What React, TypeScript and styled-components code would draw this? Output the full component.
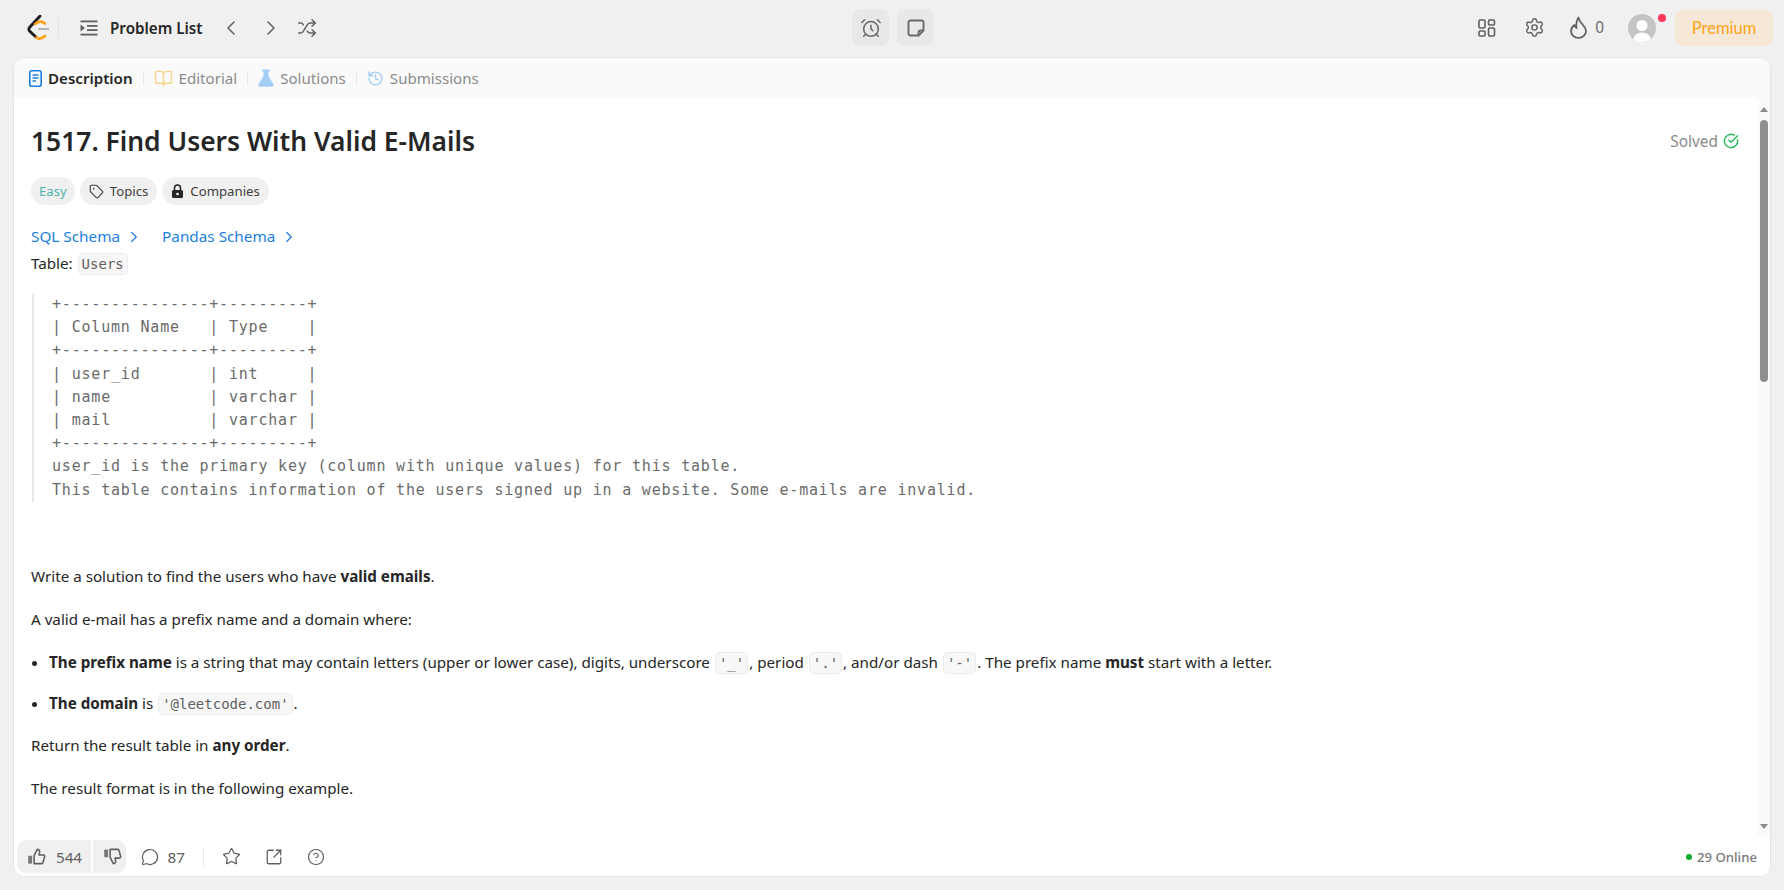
import React from 'react';
import styled, { createGlobalStyle } from 'styled-components';
import {
  AlarmClock, ChevronLeft, ChevronRight, CircleCheckBig, CircleHelp, BookOpen, History,
  MessageCircle, Settings, Shuffle, SquareArrowOutUpRight, Star, Tag,
} from 'lucide-react';

const Global = createGlobalStyle`
  html, body { margin: 0; height: 100%; background: #f0f0f0; overflow: hidden; }
  body { font-family: "Noto Sans", "Open Sans", sans-serif; color: #262626; }
  #root { height: 100%; }
  * { box-sizing: border-box; }
`;

const Page = styled.div`
  height: 890px;
  display: flex;
  flex-direction: column;
  padding: 0 13px 13px;
`;

const TopBar = styled.header`
  height: 57px;
  flex: none;
  display: grid;
  grid-template-columns: 1fr auto 1fr;
  align-items: center;
  padding-bottom: 2px;
  margin-right: -2px;
`;

const TopLeft = styled.div`
  display: flex;
  align-items: center;
  color: #5f5f5f;
`;

const TopRight = styled.div`
  display: flex;
  align-items: center;
  justify-content: flex-end;
  color: #5f5f5f;
`;

const Logo = styled.svg`
  width: 22px;
  height: 26px;
  margin-left: 14px;
`;

const BarDivider = styled.span`
  width: 1px;
  height: 18px;
  background: #e2e2e2;
  margin: 0 21px 0 9px;
`;

const ProblemList = styled.span`
  font-size: 15.2px;
  font-weight: 600;
  color: #262626;
  margin: 0 17px 0 12px;
  white-space: nowrap;
`;

const NavIcon = styled.span<{ $gap?: number }>`
  display: flex;
  margin-right: ${(p) => p.$gap ?? 0}px;
`;

const CenterTools = styled.div`
  display: flex;
  gap: 8px;
`;

const ToolButton = styled.div`
  width: 37px;
  height: 37px;
  border-radius: 8px;
  background: #e8e8e8;
  display: flex;
  align-items: center;
  justify-content: center;
  color: #6b6b6b;
`;

const Streak = styled.span`
  font-size: 15.4px;
  color: #6b6b6b;
  margin: 0 24px 0 8px;
`;

const AvatarWrap = styled.div`
  position: relative;
  width: 28px;
  height: 28px;
  margin-right: 19px;
`;

const RedDot = styled.span`
  position: absolute;
  top: 0;
  right: -10px;
  width: 8px;
  height: 8px;
  border-radius: 50%;
  background: #ff375f;
`;

const Premium = styled.div`
  width: 98px;
  height: 37px;
  border-radius: 9px;
  background: #f5e8d6;
  color: #ffa116;
  font-family: "Lato", sans-serif;
  font-size: 16.5px;
  display: flex;
  align-items: center;
  justify-content: center;
`;

const Card = styled.main`
  flex: 1;
  min-height: 0;
  display: flex;
  flex-direction: column;
  background: #fff;
  border: 1px solid #e4e4e4;
  border-radius: 11px;
  overflow: hidden;
`;

const Tabs = styled.nav`
  height: 40px;
  flex: none;
  background: #fafafa;
  display: flex;
  align-items: center;
  padding-left: 15px;
`;

const Tab = styled.div<{ $active?: boolean }>`
  display: flex;
  align-items: center;
  gap: 6px;
  font-size: 15.1px;
  font-weight: ${(p) => (p.$active ? 600 : 400)};
  color: ${(p) => (p.$active ? '#262626' : '#8a8a8a')};
  white-space: nowrap;
`;

const TabDivider = styled.span`
  width: 1px;
  height: 14px;
  background: #e6e6e6;
  margin: 0 10px;
`;

const Body = styled.div`
  flex: 1;
  min-height: 0;
  display: flex;
`;

const Content = styled.div`
  flex: 1;
  min-width: 0;
  overflow: hidden;
  padding: 0 17px;
`;

const Rail = styled.div`
  width: 13px;
  flex: none;
  background: #fafafa;
  display: flex;
  flex-direction: column;
  align-items: center;
`;

const RailButton = styled.div`
  height: 22px;
  flex: none;
  display: flex;
  align-items: center;
  justify-content: center;
`;

const Arrow = styled.span<{ $down?: boolean }>`
  width: 0;
  height: 0;
  border-left: 4px solid transparent;
  border-right: 4px solid transparent;
  border-${(p) => (p.$down ? 'top' : 'bottom')}: 5px solid #8a8a8a;
`;

const Thumb = styled.div`
  width: 8px;
  height: 262px;
  border-radius: 4px;
  background: #8f8f8f;
`;

const RailSpace = styled.div`
  flex: 1;
`;

const TitleRow = styled.div`
  display: flex;
  align-items: center;
  justify-content: space-between;
  height: 79px;
  padding-top: 7px;
`;

const Title = styled.h1`
  margin: 0;
  font-size: 26.4px;
  font-weight: 600;
  color: #262626;
`;

const Solved = styled.div`
  display: flex;
  align-items: center;
  gap: 5px;
  font-size: 15.4px;
  color: #8a8a8a;
  margin-right: 1px;
`;

const Pills = styled.div`
  display: flex;
  gap: 5px;
  height: 28px;
`;

const Pill = styled.div<{ $green?: boolean }>`
  display: flex;
  align-items: center;
  gap: 6px;
  height: 28px;
  padding: 0 ${(p) => (p.$green ? 8 : 9)}px;
  border-radius: 14px;
  background: #f0f0f0;
  font-size: 13.2px;
  color: ${(p) => (p.$green ? '#4db6ac' : '#3d3d3d')};
`;

const LinkRow = styled.div`
  display: flex;
  margin-top: 20px;
  line-height: 23px;
  gap: 19px;
`;

const SchemaLink = styled.a`
  display: flex;
  align-items: center;
  gap: 5px;
  color: #1a7fe0;
  font-size: 15.3px;
`;

const Para = styled.p<{ $top?: number }>`
  margin: ${(p) => p.$top ?? 19}px 0 0;
  font-size: 15.2px;
  line-height: 24px;
  color: #262626;
`;

const TableLine = styled(Para)`
  margin: 3px 0 0;
`;

const Code = styled.code`
  font-family: "DejaVu Sans Mono", monospace;
  font-size: 14px;
  color: #5f5f5f;
  background: #f7f7f7;
  border: 1px solid #ececec;
  border-radius: 5px;
  padding: 2px 3px;
  margin: 0 1px;
`;

const Pre = styled.pre`
  margin: 17px 0 0 1px;
  padding: 0 0 0 18px;
  border-left: 2px solid #e8e8e8;
  font-family: "DejaVu Sans Mono", monospace;
  font-size: 15px;
  letter-spacing: 0.8px;
  line-height: 23.2px;
  color: #6b6b6b;
`;

const List = styled.ul`
  margin: 19px 0 0;
  padding: 0 0 0 18px;
  font-size: 15.2px;
  line-height: 24px;
  color: #262626;
`;

const Item = styled.li`
  margin-top: 16px;
  &:first-child { margin-top: 0; }
`;

const Footer = styled.footer`
  height: 39px;
  flex: none;
  display: flex;
  align-items: center;
  padding-left: 3px;
  color: #5f5f5f;
  background: #fff;
`;

const Vote = styled.div`
  display: flex;
  align-items: center;
  height: 33px;
  border-radius: 9px;
  overflow: hidden;
  gap: 1.5px;
  background: #fff;
`;

const VoteSide = styled.div<{ $w: number }>`
  height: 100%;
  width: ${(p) => p.$w}px;
  background: #f0f0f0;
  display: flex;
  align-items: center;
  padding-left: 10px;
  gap: 10px;
  font-size: 15.2px;
`;

const Count = styled.span`
  display: flex;
  align-items: center;
  gap: 9px;
  margin-left: 15px;
  font-size: 15.2px;
`;

const FootDivider = styled.span`
  width: 1px;
  height: 18px;
  background: #eaeaea;
  margin: 0 18px;
`;

const FootIcon = styled.span`
  display: flex;
  margin-right: 24px;
`;

const Online = styled.div`
  margin-left: auto;
  margin-right: 13px;
  display: flex;
  align-items: center;
  gap: 5px;
  font-size: 13.2px;
  font-weight: 500;
  color: #7a7a7a;
`;

const OnlineDot = styled.span`
  width: 6px;
  height: 6px;
  border-radius: 50%;
  background: #0fa92b;
`;

const tableText = `+---------------+---------+
| Column Name   | Type    |
+---------------+---------+
| user_id       | int     |
| name          | varchar |
| mail          | varchar |
+---------------+---------+
user_id is the primary key (column with unique values) for this table.
This table contains information of the users signed up in a website. Some e-mails are invalid.`;

function Thumbs({ down }: { down?: boolean }) {
  return (
    <svg width="19" height="19" viewBox="0 0 24 24" fill="none" stroke="#5f5f5f" strokeWidth="2" strokeLinejoin="round">
      <g transform={down ? 'translate(0 24) scale(1 -1)' : undefined}>
        <rect x="1.5" y="11" width="5" height="10" rx="1" fill="#7a7a7a" stroke="none" />
        <path d="M9 11 L13 3 a3 3 0 0 1 3 3.6 L15.2 10 h5 a2 2 0 0 1 2 2.6 l-2 7 a2 2 0 0 1-2 1.4 H9 z" />
      </g>
    </svg>
  );
}

export default function App() {
  return (
    <>
      <Global />
      <Page>
        <TopBar>
          <TopLeft>
            <Logo viewBox="0 0 22 26" fill="none">
              <path d="M13 1 L2.5 12.5 Q1 14.5 3 16.5 L9.5 22.5" stroke="#1a1a1a" strokeWidth="2.8" strokeLinecap="round" />
              <path d="M8 9 Q13 4.5 18 8.5" stroke="#ffa116" strokeWidth="2.6" strokeLinecap="round" />
              <path d="M9.5 22.5 Q13 25.5 18 21" stroke="#ffa116" strokeWidth="2.6" strokeLinecap="round" />
              <path d="M12 14 H21" stroke="#b3b3b3" strokeWidth="2.2" strokeLinecap="round" />
            </Logo>
            <BarDivider />
            <svg width="18" height="16" viewBox="0 0 18 16" fill="#5f5f5f">
              <rect x="0.5" y="0.5" width="17" height="1.8" />
              <rect x="7" y="5" width="10.5" height="1.8" />
              <rect x="7" y="9.2" width="10.5" height="1.8" />
              <rect x="0.5" y="13.7" width="17" height="1.8" />
              <path d="M0.5 4.5 L5 8 L0.5 11.5 Z" />
            </svg>
            <ProblemList>Problem List</ProblemList>
            <NavIcon $gap={16}><ChevronLeft size={24} strokeWidth={1.5} /></NavIcon>
            <NavIcon $gap={14}><ChevronRight size={24} strokeWidth={1.5} /></NavIcon>
            <Shuffle size={20} strokeWidth={1.7} />
          </TopLeft>
          <CenterTools>
            <ToolButton><AlarmClock size={22} strokeWidth={1.7} /></ToolButton>
            <ToolButton>
              <svg width="18" height="18" viewBox="0 0 18 18" fill="none" stroke="#6b6b6b" strokeWidth="1.9" strokeLinejoin="round">
                <path d="M3.5 1.5 h11 a2 2 0 0 1 2 2 v8 l-5 5 h-8 a2 2 0 0 1-2-2 v-11 a2 2 0 0 1 2-2 z" />
                <path d="M11.5 16.5 v-3 a2 2 0 0 1 2-2 h3" />
              </svg>
            </ToolButton>
          </CenterTools>
          <TopRight>
            <NavIcon $gap={28}>
              <svg width="18" height="18" viewBox="0 0 18 18" fill="none" stroke="#5f5f5f" strokeWidth="1.6">
                <rect x="1" y="1" width="6" height="8" rx="1.2" />
                <rect x="10.5" y="1" width="6" height="5" rx="1.2" />
                <rect x="1" y="12" width="6" height="5" rx="1.2" />
                <rect x="10.5" y="9" width="6" height="8" rx="1.2" />
              </svg>
            </NavIcon>
            <NavIcon $gap={25}><Settings size={21} strokeWidth={1.6} /></NavIcon>
            <svg width="17" height="23" viewBox="0 0 17 23" fill="none" stroke="#5f5f5f" strokeWidth="1.7" strokeLinejoin="round">
              <path d="M8.5 1.5 C9 5 11 6.5 13 9 C15 11.5 16 13 16 15 A7.5 7 0 0 1 1 15 C1 12.5 2.5 10.5 4.5 9 C4.8 10.5 5.5 11.5 6.5 12 C6 8 6.5 4.5 8.5 1.5 Z" />
            </svg>
            <Streak>0</Streak>
            <AvatarWrap>
              <svg width="28" height="28" viewBox="0 0 28 28">
                <defs>
                  <clipPath id="av"><circle cx="14" cy="14" r="14" /></clipPath>
                </defs>
                <g clipPath="url(#av)">
                  <rect width="28" height="28" fill="#c4c4c4" />
                  <circle cx="14" cy="11.5" r="5.5" fill="#fff" />
                  <ellipse cx="14" cy="26" rx="9" ry="7.5" fill="#fff" />
                </g>
              </svg>
              <RedDot />
            </AvatarWrap>
            <Premium>Premium</Premium>
          </TopRight>
        </TopBar>
        <Card>
          <Tabs>
            <Tab $active>
              <svg width="13" height="17" viewBox="0 0 13 17" fill="none">
                <rect x="0.8" y="0.8" width="11.4" height="15.4" rx="2" stroke="#1a7fe0" strokeWidth="1.6" />
                <path d="M3.5 5h6M3.5 8h6M3.5 11h3.5" stroke="#1a7fe0" strokeWidth="1.3" />
              </svg>
              Description
            </Tab>
            <TabDivider />
            <Tab><BookOpen size={19} color="#f6d58f" strokeWidth={1.8} />Editorial</Tab>
            <TabDivider />
            <Tab>
              <svg width="16" height="18" viewBox="0 0 16 18" fill="#a3cdf5">
                <rect x="4" y="0.5" width="8" height="1.8" rx="0.9" />
                <path d="M5.5 2h5v5l5 8.5a1.5 1.5 0 0 1-1.3 2.2H1.8a1.5 1.5 0 0 1-1.3-2.2l5-8.5z" />
              </svg>
              Solutions
            </Tab>
            <TabDivider />
            <Tab><History size={17} color="#a3cdf5" strokeWidth={2} />Submissions</Tab>
          </Tabs>
          <Body>
            <Content>
              <TitleRow>
                <Title>1517. Find Users With Valid E-Mails</Title>
                <Solved>Solved <CircleCheckBig size={16} color="#2cbb5d" strokeWidth={2.2} /></Solved>
              </TitleRow>
              <Pills>
                <Pill $green>Easy</Pill>
                <Pill><Tag size={15} strokeWidth={1.8} />Topics</Pill>
                <Pill>
                  <svg width="13" height="15" viewBox="0 0 13 15">
                    <path d="M3.5 6V4a3 3 0 0 1 6 0v2" fill="none" stroke="#262626" strokeWidth="1.6" />
                    <rect x="1" y="6" width="11" height="8" rx="1.5" fill="#262626" />
                    <circle cx="6.5" cy="10" r="1.3" fill="#fff" />
                  </svg>
                  Companies
                </Pill>
              </Pills>
              <LinkRow>
                <SchemaLink>SQL Schema <ChevronRight size={18} strokeWidth={1.6} /></SchemaLink>
                <SchemaLink>Pandas Schema <ChevronRight size={18} strokeWidth={1.6} /></SchemaLink>
              </LinkRow>
              <TableLine>Table: <Code>Users</Code></TableLine>
              <Pre>{tableText}</Pre>
              <Para $top={62}>Write a solution to find the users who have <strong>valid emails</strong>.</Para>
              <Para>A valid e-mail has a prefix name and a domain where:</Para>
              <List>
                <Item>
                  <strong>The prefix name</strong> is a string that may contain letters (upper or lower case), digits, underscore <Code>'_'</Code>, period <Code>'.'</Code>, and/or dash <Code>'-'</Code>. The prefix name <strong>must</strong> start with a letter.
                </Item>
                <Item><strong>The domain</strong> is <Code>'@leetcode.com'</Code>.</Item>
              </List>
              <Para $top={17}>Return the result table in <strong>any order</strong>.</Para>
              <Para>The result format is in the following example.</Para>
            </Content>
            <Rail>
              <RailButton><Arrow /></RailButton>
              <Thumb />
              <RailSpace />
              <RailButton><Arrow $down /></RailButton>
            </Rail>
          </Body>
          <Footer>
            <Vote>
              <VoteSide $w={74}><Thumbs />544</VoteSide>
              <VoteSide $w={33}><Thumbs down /></VoteSide>
            </Vote>
            <Count><MessageCircle size={18} strokeWidth={1.6} />87</Count>
            <FootDivider />
            <FootIcon><Star size={19} strokeWidth={1.6} /></FootIcon>
            <FootIcon><SquareArrowOutUpRight size={18} strokeWidth={1.7} /></FootIcon>
            <FootIcon><CircleHelp size={18} strokeWidth={1.6} /></FootIcon>
            <Online><OnlineDot />29 Online</Online>
          </Footer>
        </Card>
      </Page>
    </>
  );
}
